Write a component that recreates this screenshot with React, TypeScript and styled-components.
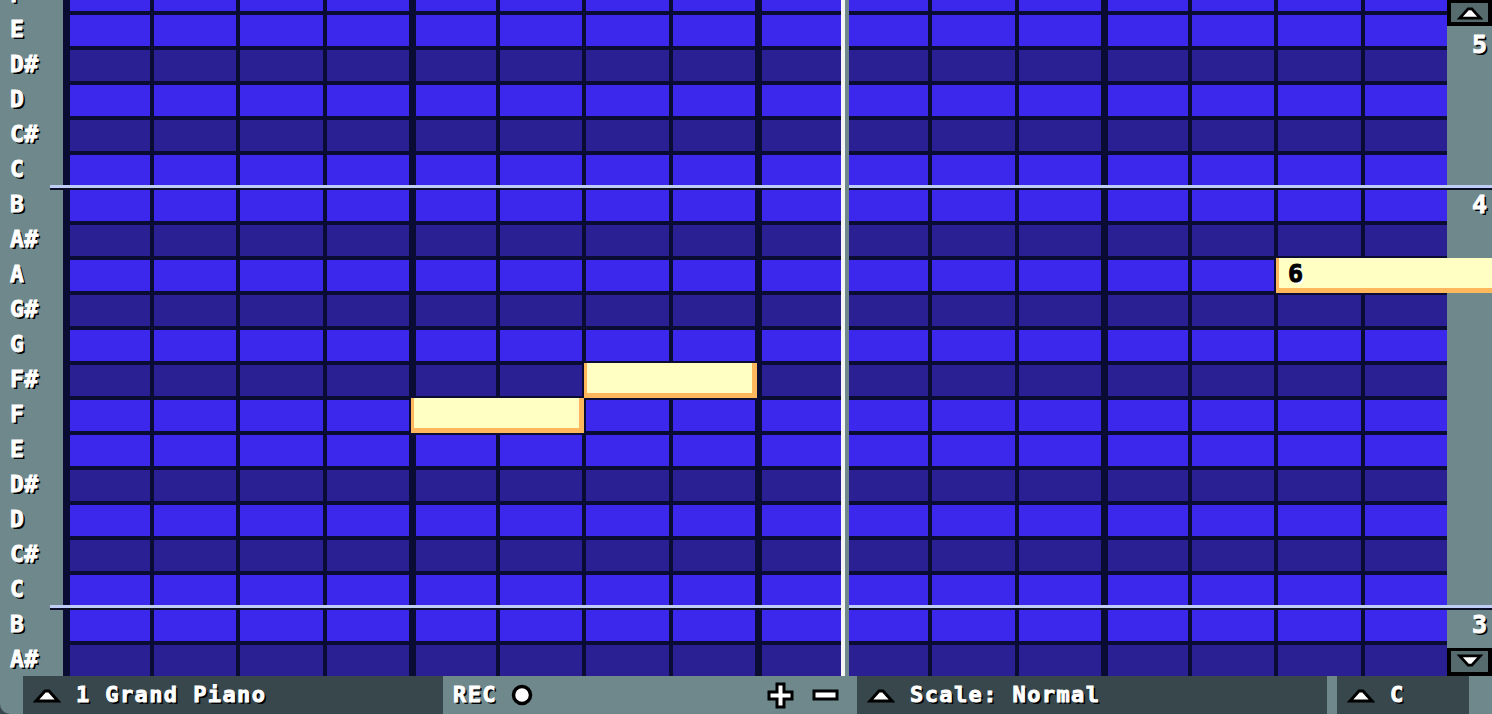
import React from "react";
import styled, { createGlobalStyle } from "styled-components";

const COL_W = 86.5;
const ROW_PITCH = 35;
const GRID_X = 63;
const FIRST_ROW_TOP = -20;

const c = {
  natural: "#3c28ec",
  sharp: "#2b1f94",
  line: "#0b0c33",
  slate: "#6f888b",
  dark: "#37474b",
  button: "#556b6d",
  noteFill: "#ffffc4",
  noteEdge: "#ffb75e",
  octave: "#bfcdf6",
};

const PITCHES = [
  "F", "E", "D#", "D", "C#", "C", "B", "A#", "A", "G#",
  "G", "F#", "F", "E", "D#", "D", "C#", "C", "B", "A#",
];

// notes: row index, start column, length in columns
const NOTES = [
  { row: 12, col: 4, len: 2, label: "" },
  { row: 11, col: 6, len: 2, label: "" },
  { row: 8, col: 14, len: 2.6, label: "6" },
];

const rowTop = (i: number) => FIRST_ROW_TOP + i * ROW_PITCH;

const GlobalStyle = createGlobalStyle`
  html, body {
    margin: 0;
    padding: 0;
    background: ${c.dark};
    overflow: hidden;
  }
  * { box-sizing: border-box; }
`;

const Screen = styled.div`
  width: 1492px;
  height: 714px;
  display: flex;
  flex-direction: column;
  overflow: hidden;
  border-bottom-left-radius: 10px;
  font-family: "DejaVu Sans Mono", "Liberation Mono", monospace;
  font-weight: bold;
`;

const Main = styled.div`
  position: relative;
  display: flex;
  height: 676px;
  flex: none;
  overflow: hidden;
`;

const Gutter = styled.div`
  width: 63px;
  flex: none;
  background: ${c.slate};
`;

const LabelStack = styled.div`
  margin-top: ${FIRST_ROW_TOP}px;
  display: flex;
  flex-direction: column;
`;

const PitchLabel = styled.div`
  height: ${ROW_PITCH}px;
  padding: 0 0 7px 10px;
  display: flex;
  align-items: center;
  color: #fff;
  font-size: 23px;
  letter-spacing: 0.5px;
  -webkit-text-stroke: 0.9px #fff;
  text-shadow: 2px 2px 0 #000;
`;

const Roll = styled.div`
  width: 1384px;
  flex: none;
  background: ${c.line};
  overflow: hidden;
`;

const RowStack = styled.div`
  margin-top: ${FIRST_ROW_TOP}px;
  display: flex;
  flex-direction: column;
  gap: 4px;
`;

const Row = styled.div`
  display: grid;
  grid-template-columns: repeat(16, 1fr);
  height: 31px;
`;

const Cell = styled.div<{ $sharp: boolean; $thick: boolean }>`
  background: ${(p) => (p.$sharp ? c.sharp : c.natural)};
  border-left: ${(p) => (p.$thick ? 7 : 4)}px solid ${c.line};
`;

const Scrollbar = styled.div`
  position: relative;
  width: 45px;
  flex: none;
  background: ${c.slate};
  display: flex;
  flex-direction: column;
  justify-content: space-between;
`;

const ScrollButton = styled.div<{ $h: number }>`
  height: ${(p) => p.$h}px;
  background: ${c.button};
  border: 4px solid #000;
  border-top-width: 3px;
  display: flex;
  align-items: center;
  justify-content: center;
`;

const OctaveNum = styled.div<{ $top: number }>`
  position: absolute;
  top: ${(p) => p.$top}px;
  right: 5px;
  color: #fff;
  font-size: 25px;
  line-height: 24px;
  -webkit-text-stroke: 0.9px #fff;
  text-shadow: 2px 2px 0 #000;
`;

const OctaveLine = styled.div<{ $top: number }>`
  position: absolute;
  left: 50px;
  right: 0;
  top: ${(p) => p.$top}px;
  height: 5px;
  border-top: 3px solid ${c.octave};
  background: #0d0f26;
  z-index: 2;
`;

const Playhead = styled.div`
  position: absolute;
  top: 0;
  bottom: 0;
  left: 841px;
  width: 8px;
  border-left: 4px solid #f4f6f6;
  background: ${c.slate};
  z-index: 3;
`;

const Note = styled.div`
  position: absolute;
  height: 35px;
  background: ${c.noteFill};
  border-left: 3px solid ${c.noteEdge};
  border-right: 5px solid ${c.noteEdge};
  border-bottom: 5px solid ${c.noteEdge};
  padding-left: 9px;
  display: flex;
  align-items: center;
  color: #000;
  font-size: 25px;
  -webkit-text-stroke: 1px #000;
  text-shadow: 2px 2px 0 #fff;
  z-index: 4;
`;

const Bar = styled.div`
  height: 38px;
  flex: none;
  display: flex;
  background: ${c.slate};
  padding-left: 23px;
`;

const Segment = styled.div<{ $width: number; $light?: boolean; $gap?: number }>`
  width: ${(p) => p.$width}px;
  flex: none;
  display: flex;
  align-items: center;
  gap: ${(p) => p.$gap ?? 15}px;
  padding-left: 10px;
  background: ${(p) => (p.$light ? c.slate : c.dark)};
  color: #fff;
  font-size: 22px;
  letter-spacing: 1.4px;
  -webkit-text-stroke: 0.9px #fff;
  text-shadow: 2px 2px 0 #000;
`;

const Spacer = styled.div<{ $w?: number }>`
  flex: ${(p) => (p.$w ? "none" : "1")};
  width: ${(p) => (p.$w ? `${p.$w}px` : "auto")};
`;

const BarLabel = styled.span`
  padding-bottom: 2px;
`;

const ZoomButtons = styled.div`
  display: flex;
  align-items: center;
  gap: 18px;
  margin-right: 18px;
`;

const UpArrow = ({ w = 28, h = 18 }: { w?: number; h?: number }) => (
  <svg width={w} height={h} viewBox="0 0 28 18">
    <polygon points="3,15 12,5 16,5 25,15" fill="#fff" stroke="#000" strokeWidth="3" />
  </svg>
);

const DownArrow = () => (
  <svg width={26} height={17} viewBox="0 0 28 18">
    <polygon points="3,3 25,3 16,13 12,13" fill="#fff" stroke="#000" strokeWidth="3" />
  </svg>
);

const RecDot = () => (
  <svg width={22} height={22} viewBox="0 0 22 22">
    <circle cx="11" cy="11" r="8.5" fill="#fff" stroke="#000" strokeWidth="3.5" />
  </svg>
);

const PlusIcon = () => (
  <svg width={27} height={27} viewBox="0 0 27 27">
    <polygon
      points="10,2 17,2 17,10 25,10 25,17 17,17 17,25 10,25 10,17 2,17 2,10 10,10"
      fill="#fff"
      stroke="#000"
      strokeWidth="3"
    />
  </svg>
);

const MinusIcon = () => (
  <svg width={27} height={13} viewBox="0 0 27 13">
    <rect x="2" y="2" width="23" height="8" fill="#fff" stroke="#000" strokeWidth="3" />
  </svg>
);

export default function App() {
  return (
    <>
      <GlobalStyle />
      <Screen>
        <Main>
          <Gutter>
            <LabelStack>
              {PITCHES.map((p, i) => (
                <PitchLabel key={i}>{p}</PitchLabel>
              ))}
            </LabelStack>
          </Gutter>
          <Roll>
            <RowStack>
              {PITCHES.map((p, i) => (
                <Row key={i}>
                  {Array.from({ length: 16 }, (_, col) => (
                    <Cell key={col} $sharp={p.includes("#")} $thick={col % 4 === 0} />
                  ))}
                </Row>
              ))}
            </RowStack>
          </Roll>
          <Scrollbar>
            <ScrollButton $h={26}>
              <UpArrow w={26} h={17} />
            </ScrollButton>
            <OctaveNum $top={33}>5</OctaveNum>
            <OctaveNum $top={193}>4</OctaveNum>
            <OctaveNum $top={613}>3</OctaveNum>
            <ScrollButton $h={28}>
              <DownArrow />
            </ScrollButton>
          </Scrollbar>

          <Playhead />
          <OctaveLine $top={rowTop(5) + 30} />
          <OctaveLine $top={rowTop(17) + 30} />
          {NOTES.map((n, i) => (
            <Note
              key={i}
              style={{
                left: GRID_X + n.col * COL_W + 2,
                top: rowTop(n.row) - 2,
                width: n.len * COL_W,
              }}
            >
              {n.label}
            </Note>
          ))}
        </Main>

        <Bar>
          <Segment $width={420}>
            <UpArrow />
            <BarLabel>1 Grand Piano</BarLabel>
          </Segment>
          <Segment $width={414} $light $gap={14}>
            <BarLabel>REC</BarLabel>
            <RecDot />
            <Spacer />
            <ZoomButtons>
              <PlusIcon />
              <MinusIcon />
            </ZoomButtons>
          </Segment>
          <Segment $width={470}>
            <UpArrow />
            <BarLabel>Scale: Normal</BarLabel>
          </Segment>
          <Spacer $w={10} />
          <Segment $width={132}>
            <UpArrow />
            <BarLabel>C</BarLabel>
          </Segment>
        </Bar>
      </Screen>
    </>
  );
}
